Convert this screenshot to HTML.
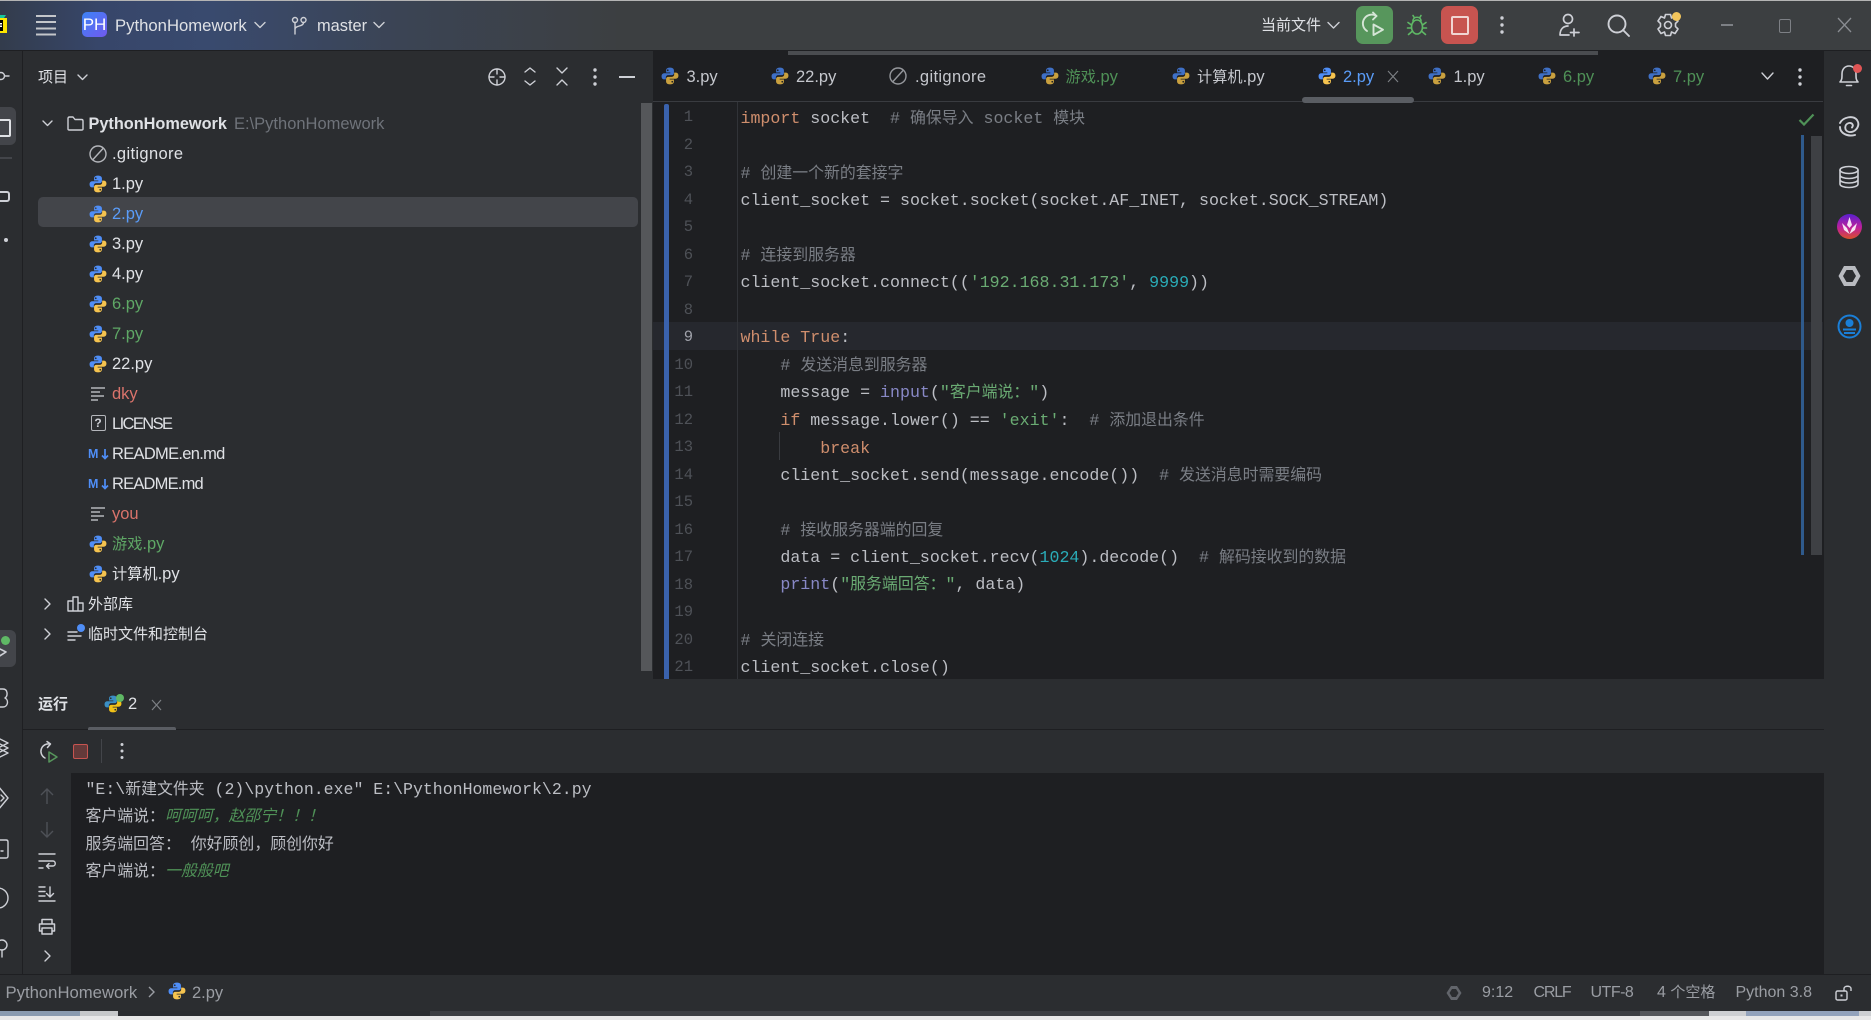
<!DOCTYPE html>
<html lang="zh">
<head>
<meta charset="utf-8">
<title>PythonHomework</title>
<style>
html,body{margin:0;padding:0;background:#e8e8e8}
#r{position:relative;width:1871px;height:1020px;overflow:hidden;background:#e8e8e8;font-family:"Liberation Sans","Noto Sans CJK SC",sans-serif;color:#dfe1e5}
.b{position:absolute}
svg.a{position:absolute;overflow:visible}
.t{position:absolute;white-space:pre;font-size:16.5px;line-height:20px;height:20px;color:#dfe1e5}
.tab{position:absolute;white-space:pre;font-size:16.5px;line-height:20px;top:67px;color:#c5c7cd}
.l{position:absolute;left:740.5px;white-space:pre;font-family:"Liberation Mono","Noto Sans CJK SC",monospace;font-size:16.62px;line-height:27.5px;height:27.5px;color:#bcbec4}
.n{position:absolute;left:661px;width:32px;text-align:right;font-family:"Liberation Mono",monospace;font-size:15.5px;line-height:27.5px;color:#4e5157}
.c{position:absolute;left:85.5px;white-space:pre;font-family:"Liberation Mono","Noto Sans CJK SC",monospace;font-size:16.55px;line-height:27px;color:#bcbec4}
.z{font-weight:normal;font-size:15.9px}
.y{font-weight:normal;font-size:15.2px}
.k{color:#cf8e6d}.m{color:#7a7e85}.s{color:#6aab73}.d{color:#2aacb8}.f{color:#8888c6}
.i{color:#4f9157;font-style:italic}
.st{position:absolute;white-space:pre;font-size:16px;line-height:20px;top:983px;color:#9a9da3}
.ic{fill:none;stroke:#ced0d6;stroke-width:1.4;stroke-linecap:round;stroke-linejoin:round}
</style>
</head>
<body>
<div id="r">
<svg width="0" height="0" style="position:absolute">
<defs>
<symbol id="pyb" viewBox="0 0 16 16"><path d="M8 .6C5.3.6 4.5 1.7 4.5 3.2V4.9H8.3V5.6H3C1.4 5.6.5 6.7.5 8.3.5 10 1.4 11 3 11H4.3V9.3C4.3 8.1 5.3 7.2 6.5 7.2H9.6C10.700 7.2 11.500 6.400 11.500 5.300V3.200C11.500 1.700 10.500 .6 8 .6ZM6 2.100A.8.8 0 1 1 6 3.700.8.8 0 0 1 6 2.100Z" fill="currentColor" fill-rule="evenodd"/></symbol>
<symbol id="py" viewBox="0 0 16 16"><use href="#pyb" width="16" height="16" style="color:#4f8ef7"/><g transform="rotate(180 8 8)"><use href="#pyb" width="16" height="16" style="color:#f5c34f"/></g></symbol>
<symbol id="pyd" viewBox="0 0 16 16"><use href="#pyb" width="16" height="16" style="color:#3f70c6"/><g transform="rotate(180 8 8)"><use href="#pyb" width="16" height="16" style="color:#c9a03f"/></g></symbol>
<symbol id="pyr" viewBox="0 0 16 16"><use href="#pyb" width="16" height="16" style="color:#3b8fc4"/><g transform="rotate(180 8 8)"><use href="#pyb" width="16" height="16" style="color:#f2c218"/></g></symbol>
<symbol id="ign" viewBox="0 0 18 18"><circle cx="9" cy="9" r="8" fill="none" stroke="currentColor" stroke-width="1.4"/><path d="M4 14.500 14 3.500" fill="none" stroke="currentColor" stroke-width="1.4"/></symbol>
<symbol id="txt" viewBox="0 0 16 16"><path d="M1 2H15M1 6H10M1 10H14M1 14H8" fill="none" stroke="#b4b6bb" stroke-width="1.4"/></symbol>
<symbol id="md" viewBox="0 0 8 12"><path d="M4 1V10.500M1 7.500 4 10.500 7 7.500" fill="none" stroke="#4f8ef7" stroke-width="1.700"/></symbol>
</defs>
</svg>

<!-- title bar -->
<div class="b" style="left:0;top:0;width:1871px;height:50px;background:linear-gradient(90deg,#333c4c 0,#37466a 100px,#394a6e 210px,#3b4454 400px,#3c3f41 620px,#3c3f41 100%)"></div>
<div class="b" style="left:0;top:0;width:1871px;height:1px;background:#b4b4b4"></div>
<div class="b" style="left:0;top:50px;width:1871px;height:1px;background:#1e1f22"></div>
<svg class="a" style="left:0;top:15px" width="8" height="20"><rect x="-8" y="3" width="15" height="15" fill="#ffe600"/><path d="M-8 3H4L6 0H-8Z" fill="#18c79a"/><rect x="-8" y="5" width="11" height="11" fill="#000"/><rect x="-1" y="8" width="3" height="1.500" fill="#fff"/><rect x="-1" y="10.500" width="3" height="1.500" fill="#fff"/></svg>
<svg class="a" style="left:36px;top:15px" width="20" height="20"><path d="M0 1H20M0 7H20M0 13.500H20M0 19.500H20" stroke="#c4c6ca" stroke-width="2"/></svg>
<div class="b" style="left:82px;top:12px;width:25px;height:25px;border-radius:5px;background:linear-gradient(135deg,#3c83f5,#7159ee);color:#fff;font-size:17px;line-height:25px;text-align:center">PH</div>
<div class="t" style="left:115px;top:15.500px;font-size:16.7px">PythonHomework</div>
<svg class="a ic" style="left:254px;top:21px" width="12" height="8"><path d="M1 1.500 6 6.500 11 1.500"/></svg>
<svg class="a ic" style="left:291px;top:16px" width="16" height="20"><circle cx="4" cy="4" r="2.500"/><circle cx="12.500" cy="4" r="2.500"/><path d="M4 6.500V18M12.500 6.500C12.500 11 4 9 4 13.500"/></svg>
<div class="t" style="left:317px;top:15.500px;font-size:16.4px">master</div>
<svg class="a ic" style="left:373px;top:21px" width="12" height="8"><path d="M1 1.500 6 6.500 11 1.500"/></svg>

<div class="t" style="left:1261px;top:16px;font-size:15px">当前文件</div>
<svg class="a ic" style="left:1327px;top:21px" width="13" height="8"><path d="M1 1.500 6.500 7 12 1.500"/></svg>
<div class="b" style="left:1356px;top:6px;width:37px;height:38px;border-radius:7px;background:#57965c"></div>
<svg class="a" style="left:1362px;top:12px;fill:none;stroke:#d5e5d6;stroke-width:1.900;stroke-linecap:round;stroke-linejoin:round" width="26" height="26"><path d="M14.500 4A8.500 8.500 0 0 0 5 19"/><path d="M11 .5 14.500 4 11 7.500"/><path d="M11.500 12.500V23L21 17.700Z"/></svg>
<svg class="a" style="left:1407px;top:13px;fill:none;stroke:#5fb865;stroke-width:1.600;stroke-linecap:round" width="20" height="24"><ellipse cx="10" cy="14" rx="5.500" ry="7"/><path d="M6 8C6 3 14 3 14 8M4.500 12 1 9.500M15.500 12 19 9.500M4.500 15H.5M15.500 15H19.500M5 18.500 1.500 21.500M15 18.500 18.500 21.500M6 2.500 7.500 5M14 2.500 12.500 5"/></svg>
<div class="b" style="left:1441px;top:6px;width:37px;height:38px;border-radius:7px;background:#c75450"></div>
<div class="b" style="left:1451px;top:16px;width:14px;height:15px;border:2px solid #f0d5d3;border-radius:2px"></div>
<svg class="a" style="left:1500px;top:16px" width="4" height="18" fill="#ced0d6"><circle cx="2" cy="2" r="1.700"/><circle cx="2" cy="9" r="1.700"/><circle cx="2" cy="16" r="1.700"/></svg>
<svg class="a ic" style="left:1558px;top:13px;stroke-width:1.700" width="24" height="24"><circle cx="10" cy="6" r="4.500"/><path d="M2 22C2 15.500 6 13 10 13M2 22H11M16 16V23M12.500 19.500H21"/></svg>
<svg class="a ic" style="left:1607px;top:14px;stroke-width:1.900" width="24" height="24"><circle cx="10" cy="10" r="8.500"/><path d="M16 16 22 22"/></svg>
<svg class="a ic" style="left:1656px;top:13px;stroke-width:1.600" width="24" height="24"><path d="M9.500 1.500H14.500L15.500 5 19 3.500 22 8 19.500 10.500V13.500L22 16 19 20.500 15.500 19 14.500 22.500H9.500L8.500 19 5 20.500 2 16 4.500 13.500V10.500L2 8 5 3.500 8.500 5Z"/><circle cx="12" cy="12" r="3.500"/></svg>
<div class="b" style="left:1672px;top:12px;width:9px;height:9px;border-radius:50%;background:#f2c55c"></div>
<div class="b" style="left:1721px;top:24px;width:12px;height:1.500px;background:#7d8085"></div>
<div class="b" style="left:1779px;top:19px;width:10px;height:12px;border:1.500px solid #7d8085;border-radius:2px"></div>
<svg class="a" style="left:1838px;top:18px" width="13" height="14"><path d="M0 0 13 14M13 0 0 14" stroke="#8a8d92" stroke-width="1.300"/></svg>

<!-- left strip -->
<div class="b" style="left:0;top:51px;width:22px;height:960px;background:#2b2d30"></div>
<div class="b" style="left:22px;top:51px;width:1px;height:960px;background:#1e1f22"></div>
<svg class="a ic" style="left:-6px;top:70px" width="20" height="12"><circle cx="7" cy="6" r="3.500"/><path d="M10.500 6H15"/></svg>
<div class="b" style="left:-6px;top:107px;width:22px;height:38px;border-radius:6px;background:#43454a"></div>
<div class="b" style="left:-6px;top:119px;width:13px;height:14px;border:2px solid #dfe1e5;border-radius:2px"></div>
<div class="b" style="left:0;top:157px;width:12px;height:1.500px;background:#43454a"></div>
<div class="b" style="left:-3px;top:191px;width:9px;height:7px;border:2px solid #ced0d6;border-radius:3px"></div>
<div class="b" style="left:4px;top:238px;width:4px;height:4px;border-radius:50%;background:#ced0d6"></div>
<div class="b" style="left:-6px;top:630px;width:22px;height:37px;border-radius:6px;background:#43454a"></div>
<svg class="a ic" style="left:0;top:646px;stroke-width:1.600" width="10" height="14"><path d="M-2 2 6 6-2 11"/></svg>
<div class="b" style="left:1px;top:636px;width:9px;height:9px;border-radius:50%;background:#5fb865"></div>
<svg class="a ic" style="left:0;top:0" width="10" height="1000">
<path d="M-2 689H3C8 689 8 696 5 698 9 700 8 707 3 707H-2"/>
<path d="M-2 738 8 743-2 748M-2 743 8 748-2 753M-2 748 8 753-2 758"/>
<path d="M-2 786 8 798-2 810M1 795 4 798 1 801"/>
<path d="M-2 840H6Q8 840 8 842V856Q8 858 6 858H-2M1 851H3"/>
<circle cx="-2" cy="898" r="10"/>
<circle cx="2" cy="945" r="5"/><path d="M2 950V957"/>
</svg>

<!-- project panel -->
<div class="b" style="left:23px;top:51px;width:630px;height:628px;background:#2b2d30"></div>
<div class="t" style="left:38px;top:68px;font-size:15px">项目</div>
<svg class="a ic" style="left:77px;top:74px" width="11" height="7"><path d="M1 1 5.500 5.500 10 1"/></svg>
<svg class="a ic" style="left:487px;top:67px" width="20" height="20"><circle cx="10" cy="10" r="8"/><path d="M10 2V7M10 13V18M2 10H7M13 10H18"/></svg>
<svg class="a ic" style="left:524px;top:67px" width="12" height="19"><path d="M1 5 6 1 11 5M1 14 6 18 11 14"/></svg>
<svg class="a ic" style="left:556px;top:67px" width="12" height="19"><path d="M1 1 6 6 11 1M1 18 6 13 11 18"/></svg>
<svg class="a" style="left:593px;top:68px" width="4" height="18" fill="#ced0d6"><circle cx="2" cy="2" r="1.700"/><circle cx="2" cy="9" r="1.700"/><circle cx="2" cy="16" r="1.700"/></svg>
<div class="b" style="left:619px;top:76px;width:16px;height:1.500px;background:#ced0d6"></div>
<div class="b" style="left:38px;top:197px;width:600px;height:30px;border-radius:5px;background:#43454a"></div>
<div class="b" style="left:641px;top:103px;width:11px;height:568px;background:#55575a"></div>

<svg class="a ic" style="left:42px;top:120px" width="11" height="7"><path d="M1 1 5.500 5.500 10 1"/></svg>
<svg class="a ic" style="left:67px;top:116px" width="17" height="15"><path d="M1 2.500C1 1.500 1.500 1 2.500 1H6L8 3.500H14.500C15.500 3.500 16 4 16 5V13C16 14 15.500 14 14.500 14H2.500C1.500 14 1 14 1 13Z"/></svg>
<div class="t" style="left:88.500px;top:113.500px;font-weight:bold;font-size:16.3px">PythonHomework</div>
<div class="t" style="left:234px;top:113.500px;color:#6f737a">E:\PythonHomework</div>

<svg class="a" style="left:89px;top:144.500px;color:#b4b6bb" width="18" height="18"><use href="#ign"/></svg>
<div class="t" style="left:112px;top:143.500px;letter-spacing:.35px">.gitignore</div>
<svg class="a" style="left:88.500px;top:174.500px" width="18" height="18"><use href="#py"/></svg><div class="t" style="left:112px;top:173.500px">1.py</div>
<svg class="a" style="left:88.500px;top:204.500px" width="18" height="18"><use href="#py"/></svg><div class="t" style="left:112px;top:203.500px;color:#5a9cf8">2.py</div>
<svg class="a" style="left:88.500px;top:234.500px" width="18" height="18"><use href="#py"/></svg><div class="t" style="left:112px;top:233.500px">3.py</div>
<svg class="a" style="left:88.500px;top:264.500px" width="18" height="18"><use href="#py"/></svg><div class="t" style="left:112px;top:263.500px">4.py</div>
<svg class="a" style="left:88.500px;top:294.500px" width="18" height="18"><use href="#py"/></svg><div class="t" style="left:112px;top:293.500px;color:#5fa866">6.py</div>
<svg class="a" style="left:88.500px;top:324.500px" width="18" height="18"><use href="#py"/></svg><div class="t" style="left:112px;top:323.500px;color:#5fa866">7.py</div>
<svg class="a" style="left:88.500px;top:354.500px" width="18" height="18"><use href="#py"/></svg><div class="t" style="left:112px;top:353.500px">22.py</div>
<svg class="a" style="left:90px;top:385.500px" width="16" height="16"><use href="#txt"/></svg><div class="t" style="left:112px;top:383.500px;color:#d9736b">dky</div>
<div class="b" style="left:90.500px;top:415px;width:13px;height:14px;border:1.500px solid #b4b6bb;border-radius:2px;color:#ced0d6;font-size:12px;line-height:14px;text-align:center;font-weight:bold">?</div>
<div class="t" style="left:112px;top:413.500px;letter-spacing:-1.6px">LICENSE</div>
<div class="t" style="left:88px;top:443.500px;color:#4f8ef7;font-weight:bold;font-size:12.5px">M</div><svg class="a" style="left:100.500px;top:447.500px" width="8" height="12"><use href="#md"/></svg><div class="t" style="left:112px;top:443.500px;letter-spacing:-.7px">README.en.md</div>
<div class="t" style="left:88px;top:473.500px;color:#4f8ef7;font-weight:bold;font-size:12.5px">M</div><svg class="a" style="left:100.500px;top:477.500px" width="8" height="12"><use href="#md"/></svg><div class="t" style="left:112px;top:473.500px;letter-spacing:-.8px">README.md</div>
<svg class="a" style="left:90px;top:505.500px" width="16" height="16"><use href="#txt"/></svg><div class="t" style="left:112px;top:503.500px;color:#d9736b">you</div>
<svg class="a" style="left:88.500px;top:534.500px" width="18" height="18"><use href="#py"/></svg><div class="t" style="left:112px;top:534px;color:#5fa866"><span class="y">游戏</span>.py</div>
<svg class="a" style="left:88.500px;top:564.500px" width="18" height="18"><use href="#py"/></svg><div class="t" style="left:112px;top:564px"><span class="y">计算机</span>.py</div>
<svg class="a ic" style="left:44px;top:598px" width="7" height="12"><path d="M1 1 6 6 1 11"/></svg>
<svg class="a ic" style="left:67px;top:596px" width="17" height="16"><path d="M1 5H6V15H1ZM6 1H11V15H6ZM11 7H16V15H11Z"/></svg>
<div class="t" style="left:88px;top:594.500px;font-size:15px">外部库</div>
<svg class="a ic" style="left:44px;top:628px" width="7" height="12"><path d="M1 1 6 6 1 11"/></svg>
<svg class="a ic" style="left:67px;top:624px" width="18" height="18"><path d="M1 8H10M1 12H14M1 16H8"/></svg>
<div class="b" style="left:77px;top:624px;width:8px;height:8px;border-radius:50%;background:#4f8ef7"></div>
<div class="t" style="left:88px;top:624.500px;font-size:15px">临时文件和控制台</div>

<!-- editor -->
<div class="b" style="left:653px;top:51px;width:1171px;height:628px;background:#1e1f22"></div>
<div class="b" style="left:788px;top:51px;width:810px;height:4px;background:#4a4c50"></div>
<div class="b" style="left:653px;top:101px;width:1171px;height:1px;background:#393b40"></div>
<div class="b" style="left:1302px;top:97px;width:112px;height:6px;border-radius:3px;background:#5a5d63"></div>

<svg class="a" style="left:661px;top:67px" width="18" height="18"><use href="#pyd"/></svg><div class="tab" style="left:686.500px">3.py</div>
<svg class="a" style="left:771px;top:67px" width="18" height="18"><use href="#pyd"/></svg><div class="tab" style="left:796px">22.py</div>
<svg class="a" style="left:889px;top:67px;color:#95979c" width="18" height="18"><use href="#ign"/></svg><div class="tab" style="left:915px;letter-spacing:.35px">.gitignore</div>
<svg class="a" style="left:1041px;top:67px" width="18" height="18"><use href="#pyd"/></svg><div class="tab" style="left:1065.500px;color:#4f9157"><span class="y">游戏</span>.py</div>
<svg class="a" style="left:1171.500px;top:67px" width="18" height="18"><use href="#pyd"/></svg><div class="tab" style="left:1197px"><span class="y">计算机</span>.py</div>
<svg class="a" style="left:1318px;top:67px" width="18" height="18"><use href="#py"/></svg><div class="tab" style="left:1343px;color:#5a9cf8">2.py</div>
<svg class="a" style="left:1388px;top:71px" width="10" height="11"><path d="M0 0 10 11M10 0 0 11" stroke="#7d8085" stroke-width="1.100"/></svg>
<svg class="a" style="left:1428px;top:67px" width="18" height="18"><use href="#pyd"/></svg><div class="tab" style="left:1453.500px">1.py</div>
<svg class="a" style="left:1538px;top:67px" width="18" height="18"><use href="#pyd"/></svg><div class="tab" style="left:1563px;color:#4f9157">6.py</div>
<svg class="a" style="left:1648px;top:67px" width="18" height="18"><use href="#pyd"/></svg><div class="tab" style="left:1673px;color:#4f9157">7.py</div>
<svg class="a ic" style="left:1761px;top:72px" width="13" height="9"><path d="M1 1 6.500 7 12 1"/></svg>
<svg class="a" style="left:1798px;top:68px" width="4" height="18" fill="#ced0d6"><circle cx="2" cy="2" r="1.700"/><circle cx="2" cy="9" r="1.700"/><circle cx="2" cy="16" r="1.700"/></svg>

<div class="b" style="left:653px;top:322px;width:1171px;height:28px;background:#26282e"></div>
<div class="b" style="left:664px;top:104px;width:4.500px;height:575px;border-radius:2px 2px 0 0;background:#3a62ad"></div>
<div class="b" style="left:737px;top:102px;width:1px;height:577px;background:#313338"></div>
<div class="b" style="left:778.500px;top:432px;width:1px;height:28px;background:#393b40"></div>

<div class="n" style="top:104px">1</div>
<div class="n" style="top:131.500px">2</div>
<div class="n" style="top:159px">3</div>
<div class="n" style="top:186.500px">4</div>
<div class="n" style="top:214px">5</div>
<div class="n" style="top:241.500px">6</div>
<div class="n" style="top:269px">7</div>
<div class="n" style="top:296.500px">8</div>
<div class="n" style="top:324px;color:#a1a3ab">9</div>
<div class="n" style="top:351.500px">10</div>
<div class="n" style="top:379px">11</div>
<div class="n" style="top:406.500px">12</div>
<div class="n" style="top:434px">13</div>
<div class="n" style="top:461.500px">14</div>
<div class="n" style="top:489px">15</div>
<div class="n" style="top:516.500px">16</div>
<div class="n" style="top:544px">17</div>
<div class="n" style="top:571.500px">18</div>
<div class="n" style="top:599px">19</div>
<div class="n" style="top:626.500px">20</div>
<div class="n" style="top:654px">21</div>

<div class="l" style="top:104.500px"><span class="k">import</span> socket  <span class="m"># <b class="z">确保导入</b> socket <b class="z">模块</b></span></div>
<div class="l" style="top:159.500px"><span class="m"># <b class="z">创建一个新的套接字</b></span></div>
<div class="l" style="top:186.500px">client_socket = socket.socket(socket.AF_INET, socket.SOCK_STREAM)</div>
<div class="l" style="top:241.500px"><span class="m"># <b class="z">连接到服务器</b></span></div>
<div class="l" style="top:269px">client_socket.connect((<span class="s">'192.168.31.173'</span>, <span class="d">9999</span>))</div>
<div class="l" style="top:324px"><span class="k">while True</span>:</div>
<div class="l" style="top:351.500px">    <span class="m"># <b class="z">发送消息到服务器</b></span></div>
<div class="l" style="top:379px">    message = <span class="f">input</span>(<span class="s">"<b class="z">客户端说：</b>"</span>)</div>
<div class="l" style="top:406.500px">    <span class="k">if</span> message.lower() == <span class="s">'exit'</span>:  <span class="m"># <b class="z">添加退出条件</b></span></div>
<div class="l" style="top:434.500px">        <span class="k">break</span></div>
<div class="l" style="top:461.500px">    client_socket.send(message.encode())  <span class="m"># <b class="z">发送消息时需要编码</b></span></div>
<div class="l" style="top:516.500px">    <span class="m"># <b class="z">接收服务器端的回复</b></span></div>
<div class="l" style="top:544px">    data = client_socket.recv(<span class="d">1024</span>).decode()  <span class="m"># <b class="z">解码接收到的数据</b></span></div>
<div class="l" style="top:571px">    <span class="f">print</span>(<span class="s">"<b class="z">服务端回答：</b>"</span>, data)</div>
<div class="l" style="top:626.500px"><span class="m"># <b class="z">关闭连接</b></span></div>
<div class="l" style="top:654px">client_socket.close()</div>

<svg class="a" style="left:1798px;top:113px" width="17" height="13"><path d="M1.500 7 6 11.500 15.500 1.500" fill="none" stroke="#4f9157" stroke-width="2.200"/></svg>
<div class="b" style="left:1801px;top:135px;width:3px;height:420px;background:#2f5a8c"></div>
<div class="b" style="left:1810.500px;top:136px;width:11px;height:419px;background:#3e4044"></div>

<!-- right strip -->
<div class="b" style="left:1824px;top:51px;width:47px;height:960px;background:#2b2d30"></div>
<div class="b" style="left:1823px;top:51px;width:1px;height:960px;background:#1e1f22"></div>
<svg class="a ic" style="left:1838px;top:64px;stroke-width:1.600" width="22" height="24"><path d="M2 18C4 16 4 14 4 10 4 5 7 2 11 2S18 5 18 10C18 14 18 16 20 18ZM8.500 21.500H13.500"/></svg>
<div class="b" style="left:1852.500px;top:63.500px;width:9px;height:9px;border-radius:50%;background:#e05555"></div>
<svg class="a ic" style="left:1838px;top:115px;stroke-width:1.900" width="22" height="22"><path d="M2 8C5 2 15 0 19 5 23 11 17 18 11 17 6 16 6 9 11 8 14 7.500 16 10 14 12.500"/><path d="M2 12C2 18 9 22 17 20"/></svg>
<svg class="a ic" style="left:1839px;top:165px;stroke-width:1.600" width="20" height="24"><ellipse cx="10" cy="5" rx="9" ry="3.500"/><path d="M1 5V19C1 21 5 22.500 10 22.500S19 21 19 19V5M1 10C1 12 5 13.500 10 13.500S19 12 19 10M1 14.500C1 16.500 5 18 10 18S19 16.500 19 14.500"/></svg>
<div class="b" style="left:1837px;top:214px;width:25px;height:25px;border-radius:50%;background:linear-gradient(180deg,#5a1fd0 0,#c0209a 55%,#d8502a 100%)"></div>
<svg class="a" style="left:1841px;top:216px" width="17" height="19"><path d="M8.500 1 11 9 8.500 12 6 9ZM1 7 6 12 8.500 18 3 14ZM16 7 11 12 8.500 18 14 14Z" fill="#f6e4f4"/></svg>
<svg class="a" style="left:1837px;top:264px" width="25" height="24"><path d="M7 2H18L23.500 12 18 22H7L1.500 12Z M9.500 6H15.500L19 12 15.500 18H9.500L6 12Z" fill="#b9bbc0" fill-rule="evenodd"/></svg>
<svg class="a" style="left:1837px;top:314px;fill:none;stroke:#1a7fd8;stroke-width:2" width="25" height="25"><circle cx="12.500" cy="12.500" r="11"/><path d="M6 15.500H19M7 19H18"/><circle cx="12.500" cy="9" r="3" fill="#1a7fd8"/></svg>

<!-- run panel -->
<div class="b" style="left:23px;top:679px;width:1801px;height:50px;background:#2b2d30"></div>
<div class="b" style="left:23px;top:729px;width:1801px;height:1px;background:#1e1f22"></div>
<div class="b" style="left:23px;top:730px;width:1801px;height:43px;background:#2b2d30"></div>
<div class="t" style="left:38px;top:695px;font-size:15px;font-weight:bold">运行</div>
<svg class="a" style="left:104px;top:695px" width="18" height="18"><use href="#pyr"/></svg>
<div class="b" style="left:115.500px;top:694px;width:8px;height:8px;border-radius:50%;background:#5fb865"></div>
<div class="t" style="left:128px;top:694px">2</div>
<svg class="a" style="left:152px;top:700px" width="9" height="10"><path d="M0 0 9 10M9 0 0 10" stroke="#7d8085" stroke-width="1.200"/></svg>
<div class="b" style="left:88px;top:727px;width:88px;height:3px;border-radius:2px 2px 0 0;background:#5a5d63"></div>

<svg class="a" style="left:38px;top:741px;fill:none;stroke:#ced0d6;stroke-width:1.500;stroke-linecap:round;stroke-linejoin:round" width="20" height="21"><path d="M12 3A7.500 7.500 0 0 0 7 17"/><path d="M9 .5 12.500 3 9.500 6.500"/></svg>
<svg class="a" style="left:48px;top:751px" width="10" height="12"><path d="M1 1V11L9 6Z" fill="none" stroke="#57965c" stroke-width="1.500" stroke-linejoin="round"/></svg>
<div class="b" style="left:73px;top:743.500px;width:13px;height:13px;border:1.500px solid #c75450;border-radius:2px;background:#643a3a"></div>
<div class="b" style="left:101px;top:739px;width:1px;height:24px;background:#43454a"></div>
<svg class="a" style="left:120px;top:743px" width="4" height="16" fill="#ced0d6"><circle cx="2" cy="1.500" r="1.500"/><circle cx="2" cy="8" r="1.500"/><circle cx="2" cy="14.500" r="1.500"/></svg>

<!-- console -->
<div class="b" style="left:23px;top:773px;width:48px;height:202px;background:#2b2d30"></div>
<div class="b" style="left:71px;top:773px;width:1753px;height:202px;background:#1e1f22"></div>
<svg class="a" style="left:40px;top:788px;fill:none;stroke:#4e5157;stroke-width:1.400" width="14" height="17"><path d="M7 16V1M1 7 7 1 13 7"/></svg>
<svg class="a" style="left:40px;top:821px;fill:none;stroke:#4e5157;stroke-width:1.400" width="14" height="17"><path d="M7 1V16M1 10 7 16 13 10"/></svg>
<svg class="a ic" style="left:38px;top:853px" width="18" height="17"><path d="M1 1H17M1 8H15C18 8 18 13 15 13H9M11 10.500 8.500 13 11 15.500M1 15H5"/></svg>
<svg class="a ic" style="left:38px;top:886px" width="18" height="16"><path d="M1 1H7M1 5.500H7M1 10H7M12 1V11M8.500 7.500 12 11 15.500 7.500M1 15H17"/></svg>
<svg class="a ic" style="left:38px;top:918px;stroke-width:1.500" width="18" height="17"><path d="M4 6V1.500H14V6M4 13H1.500V6H16.500V13H14M4 10H14V16H4Z"/></svg>
<svg class="a ic" style="left:44px;top:950px" width="7" height="12"><path d="M1 1 6 6 1 11"/></svg>

<div class="c" style="top:775.500px">"E:\<b class="z">新建文件夹</b> (2)\python.exe" E:\PythonHomework\2.py</div>
<div class="c" style="top:802.500px"><b class="z">客户端说：</b><span class="i"><b class="z">呵呵呵，赵邵宁！！！</b></span></div>
<div class="c" style="top:830.500px"><b class="z">服务端回答：</b> <b class="z">你好顾创，顾创你好</b></div>
<div class="c" style="top:858px"><b class="z">客户端说：</b><span class="i"><b class="z">一般般吧</b></span></div>

<!-- status bar -->
<div class="b" style="left:0;top:975px;width:1871px;height:36px;background:#2b2d30"></div>
<div class="b" style="left:0;top:974px;width:1871px;height:1px;background:#1e1f22"></div>
<div class="st" style="left:5.500px;font-size:16.700px">PythonHomework</div>
<svg class="a" style="left:148px;top:986px;fill:none;stroke:#9a9da3;stroke-width:1.400" width="7" height="12"><path d="M1 1 6 6 1 11"/></svg>
<svg class="a" style="left:168px;top:982px" width="18" height="18"><use href="#py"/></svg>
<div class="st" style="left:192px;font-size:16.500px">2.py</div>
<svg class="a" style="left:1446px;top:985px" width="16" height="16"><path d="M5 1H11L15.500 8 11 15H5L.5 8Z M6 4H10L12.500 8 10 12H6L3.500 8Z" fill="#62656b" fill-rule="evenodd"/></svg>
<div class="st" style="left:1482px">9:12</div>
<div class="st" style="left:1533.500px;letter-spacing:-1.200px">CRLF</div>
<div class="st" style="left:1590.500px;letter-spacing:-.5px">UTF-8</div>
<div class="st" style="left:1657px">4 <span style="font-size:15px">个空格</span></div>
<div class="st" style="left:1735.500px">Python 3.8</div>
<svg class="a" style="left:1835px;top:985px;fill:none;stroke:#ced0d6;stroke-width:1.400" width="18" height="16"><rect x="1" y="6" width="11" height="9" rx="1.500"/><path d="M9 6V3.500C9 .5 16 .5 16 3.500V6"/><rect x="5.500" y="9.500" width="2" height="2" fill="#ced0d6" stroke="none"/></svg>

<!-- bottom stripe -->
<div class="b" style="left:0;top:1011px;width:1871px;height:5px;background:linear-gradient(90deg,#8a9bb0 0,#8a9bb0 80px,#c6c8ca 80px,#c6c8ca 118px,#2a2c30 118px,#2a2c30 430px,#3c3e42 430px,#3c3e42 1640px,#55575b 1640px,#55575b 1709px,#cdcfd2 1709px,#cdcfd2 1746px,#93a3bc 1746px,#93a3bc 1859px,#cdcfd2 1859px)"></div>
<div class="b" style="left:0;top:1016px;width:1871px;height:4px;background:#e8e8e8"></div>
</div>
</body>
</html>
